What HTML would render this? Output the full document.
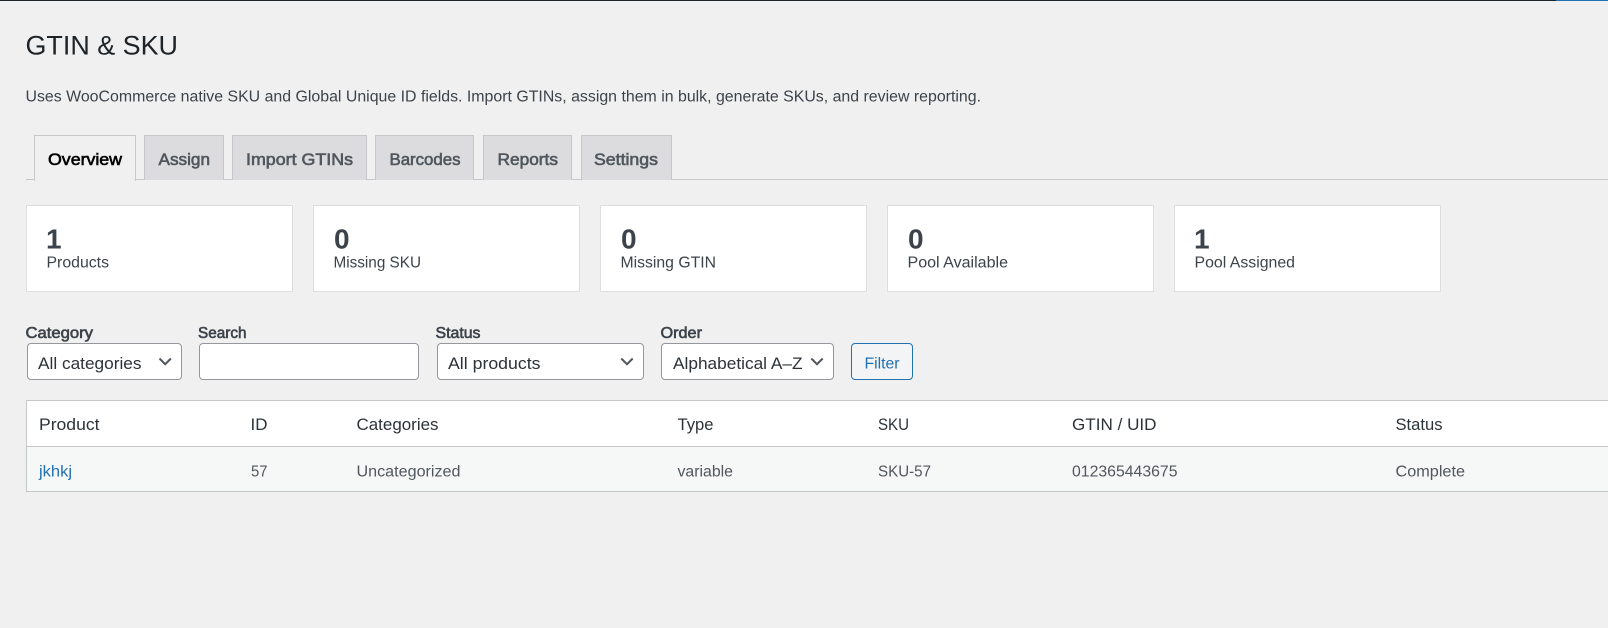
<!DOCTYPE html>
<html lang="en">
<head>
<meta charset="utf-8">
<title>GTIN &amp; SKU</title>
<style>
html,body{margin:0;padding:0;width:1608px;height:628px;overflow:hidden;background:#f0f0f1}
body{position:relative;font-family:"Liberation Sans",Arial,sans-serif}
.b{position:absolute;box-sizing:border-box}
.tab{top:135px;height:45px;background:#dcdcde;border:1px solid #c6c7ca;border-bottom:0}
.card{top:205px;width:267px;height:87px;background:#fff;border:1px solid #dedee0}
.f{top:343px;height:37px;background:#fff;border:1px solid #94979b;border-radius:4px}
svg.t{position:absolute;left:0;top:0}
svg.t text{font-family:"Liberation Sans",Arial,sans-serif;fill:#3c434a;font-size:15.3px}
svg.t text.tb{font-size:16.4px;fill:#50575e;stroke:#50575e;stroke-width:.6px}
svg.t text.lb{font-size:15.4px;stroke:#3c434a;stroke-width:.6px}
svg.t text.sl{font-size:16.4px;fill:#2c3338}
svg.t text.th{font-size:16.4px;fill:#2c3338}
svg.t text.td{font-size:15.4px;fill:#50575e}
svg.t text.n{font-size:28px;font-weight:bold;fill:#3c434a}
</style>
</head>
<body>
<div class="b" style="left:0;top:0;width:1556px;height:1px;background:#1d2327"></div>
<div class="b" style="left:1556px;top:0;width:52px;height:1px;background:#2271b1"></div>

<div class="b" style="left:26px;top:179px;width:1582px;height:1px;background:#c6c7ca"></div>
<div class="b tab" style="left:34px;width:102px;height:46px;background:#f0f0f1"></div>
<div class="b tab" style="left:144px;width:80px"></div>
<div class="b tab" style="left:232px;width:135px"></div>
<div class="b tab" style="left:375px;width:99px"></div>
<div class="b tab" style="left:483px;width:89px"></div>
<div class="b tab" style="left:581px;width:91px"></div>

<div class="b card" style="left:26px"></div>
<div class="b card" style="left:313px"></div>
<div class="b card" style="left:600px"></div>
<div class="b card" style="left:887px"></div>
<div class="b card" style="left:1174px"></div>

<div class="b f" style="left:27px;width:155px"></div>
<div class="b f" style="left:199px;width:220px"></div>
<div class="b f" style="left:437px;width:207px"></div>
<div class="b f" style="left:661px;width:173px"></div>
<div class="b f" style="left:851px;width:62px;background:#f3f4f5;border-color:#2271b1"></div>

<div class="b" style="left:26px;top:400px;width:1600px;height:92px;background:#fff;border:1px solid #c6c7ca"></div>
<div class="b" style="left:27px;top:446px;width:1590px;height:45px;background:#f6f7f7;border-top:1px solid #c6c7ca"></div>

<svg class="t" width="1608" height="628" viewBox="0 0 1608 628" xmlns="http://www.w3.org/2000/svg">
<text x="25.5" y="54.5" textLength="152.5" lengthAdjust="spacingAndGlyphs" style="font-size:27px;fill:#1d2327">GTIN &amp; SKU</text>
<text x="25.5" y="101.5" textLength="955.5" lengthAdjust="spacingAndGlyphs">Uses WooCommerce native SKU and Global Unique ID fields. Import GTINs, assign them in bulk, generate SKUs, and review reporting.</text>

<text class="tb" x="48" y="165" textLength="74" lengthAdjust="spacingAndGlyphs" style="fill:#000;stroke:#000">Overview</text>
<text class="tb" x="158.5" y="165" textLength="51.5" lengthAdjust="spacingAndGlyphs">Assign</text>
<text class="tb" x="246" y="165" textLength="107" lengthAdjust="spacingAndGlyphs">Import GTINs</text>
<text class="tb" x="389.5" y="165" textLength="71" lengthAdjust="spacingAndGlyphs">Barcodes</text>
<text class="tb" x="497.5" y="165" textLength="60.5" lengthAdjust="spacingAndGlyphs">Reports</text>
<text class="tb" x="594" y="165" textLength="64" lengthAdjust="spacingAndGlyphs">Settings</text>

<text class="n" x="46" y="248.5">1</text>
<text class="n" x="334" y="248.5">0</text>
<text class="n" x="621" y="248.5">0</text>
<text class="n" x="908" y="248.5">0</text>
<text class="n" x="1194" y="248.5">1</text>

<text x="46.5" y="267.5" textLength="62.5" lengthAdjust="spacingAndGlyphs">Products</text>
<text x="333.5" y="267.5" textLength="87.5" lengthAdjust="spacingAndGlyphs">Missing SKU</text>
<text x="620.5" y="267.5" textLength="95.5" lengthAdjust="spacingAndGlyphs">Missing GTIN</text>
<text x="907.5" y="267.5" textLength="100.5" lengthAdjust="spacingAndGlyphs">Pool Available</text>
<text x="1194.5" y="267.5" textLength="100.5" lengthAdjust="spacingAndGlyphs">Pool Assigned</text>

<text class="lb" x="25.5" y="338" textLength="67.5" lengthAdjust="spacingAndGlyphs">Category</text>
<text class="lb" x="198" y="338" textLength="48.5" lengthAdjust="spacingAndGlyphs">Search</text>
<text class="lb" x="435.5" y="338" textLength="45" lengthAdjust="spacingAndGlyphs">Status</text>
<text class="lb" x="660.5" y="338" textLength="41.5" lengthAdjust="spacingAndGlyphs">Order</text>

<text class="sl" x="38" y="369" textLength="103.5" lengthAdjust="spacingAndGlyphs">All categories</text>
<text class="sl" x="448" y="369" textLength="92.5" lengthAdjust="spacingAndGlyphs">All products</text>
<text class="sl" x="673" y="369" textLength="129.5" lengthAdjust="spacingAndGlyphs">Alphabetical A–Z</text>
<text x="864.5" y="368.3" textLength="35" lengthAdjust="spacingAndGlyphs" style="fill:#2271b1">Filter</text>

<g fill="none" stroke="#50575e" stroke-width="2">
<path d="M159.5 358.5l5.7 5.7 5.7-5.7"/>
<path d="M621.3 358.5l5.7 5.7 5.7-5.7"/>
<path d="M811.3 358.5l5.7 5.7 5.7-5.7"/>
</g>

<text class="th" x="39" y="430" textLength="60.5" lengthAdjust="spacingAndGlyphs">Product</text>
<text class="th" x="250.5" y="430" textLength="17" lengthAdjust="spacingAndGlyphs">ID</text>
<text class="th" x="356.5" y="430" textLength="82" lengthAdjust="spacingAndGlyphs">Categories</text>
<text class="th" x="677.5" y="430" textLength="36" lengthAdjust="spacingAndGlyphs">Type</text>
<text class="th" x="878" y="430" textLength="31" lengthAdjust="spacingAndGlyphs">SKU</text>
<text class="th" x="1072" y="430" textLength="84.5" lengthAdjust="spacingAndGlyphs">GTIN / UID</text>
<text class="th" x="1395.5" y="430" textLength="47" lengthAdjust="spacingAndGlyphs">Status</text>

<text class="td" x="39" y="476.7" textLength="33" lengthAdjust="spacingAndGlyphs" style="fill:#2271b1">jkhkj</text>
<text class="td" x="251" y="476.7" textLength="16.5" lengthAdjust="spacingAndGlyphs">57</text>
<text class="td" x="356.5" y="476.7" textLength="104" lengthAdjust="spacingAndGlyphs">Uncategorized</text>
<text class="td" x="677.5" y="476.7" textLength="55.5" lengthAdjust="spacingAndGlyphs">variable</text>
<text class="td" x="878" y="476.7" textLength="53" lengthAdjust="spacingAndGlyphs">SKU-57</text>
<text class="td" x="1072" y="476.7" textLength="105.5" lengthAdjust="spacingAndGlyphs">012365443675</text>
<text class="td" x="1395.5" y="476.7" textLength="69.5" lengthAdjust="spacingAndGlyphs">Complete</text>
</svg>
</body>
</html>
